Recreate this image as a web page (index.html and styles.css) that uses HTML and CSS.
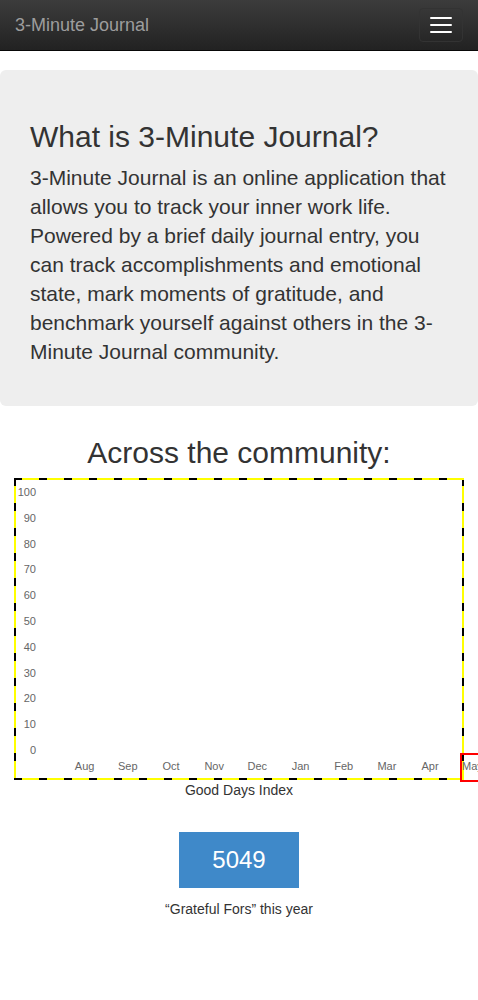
FILE: index.html
```html
<!DOCTYPE html>
<html>
<head>
<meta charset="utf-8">
<link rel="stylesheet" href="styles.css">
</head>
<body>
<nav class="navbar">
  <a class="brand">3-Minute Journal</a>
  <button class="toggle"><span class="bar"></span><span class="bar"></span><span class="bar"></span></button>
</nav>
<div class="jumbotron">
  <h1 class="jt-title">What is 3-Minute Journal?</h1>
  <p class="jt-text">3-Minute Journal is an online application that allows you to track your inner work life. Powered by a brief daily journal entry, you can track accomplishments and emotional state, mark moments of gratitude, and benchmark yourself against others in the 3-Minute Journal community.</p>
</div>
<div class="main">
  <h2 class="section-title">Across the community:</h2>
  <div class="chart">
    <div class="plot">
      <div class="y-axis">
        <span>100</span><span>90</span><span>80</span><span>70</span><span>60</span><span>50</span><span>40</span><span>30</span><span>20</span><span>10</span><span>0</span>
      </div>
    </div>
    <div class="x-axis">
      <span>Aug</span><span>Sep</span><span>Oct</span><span>Nov</span><span>Dec</span><span>Jan</span><span>Feb</span><span>Mar</span><span>Apr</span>
    </div>
    <div class="marker">May</div>
  </div>
  <div class="chart-caption">Good Days Index</div>
  <div class="stat">
    <div class="stat-btn">5049</div>
    <div class="stat-label">“Grateful Fors” this year</div>
  </div>
</div>
</body>
</html>
```
FILE: styles.css
```css
html, body {
  margin: 0;
  padding: 0;
  overflow-x: hidden;
}
body {
  font-family: "Liberation Sans", Arial, sans-serif;
  font-size: 14px;
  line-height: 1.42857;
  color: #333;
  background: #fff;
  width: 478px;
}
.navbar {
  height: 50px;
  box-sizing: content-box;
  border-bottom: 1px solid #080808;
  background: linear-gradient(to bottom, #3c3c3c 0, #222 100%);
  display: flex;
  align-items: center;
  justify-content: space-between;
  padding: 0 15px;
}
.brand {
  color: #9d9d9d;
  font-size: 18px;
  line-height: 20px;
  margin-top: -1px;
}
.toggle {
  width: 44px;
  height: 34px;
  margin-top: -1px;
  border: 1px solid #333;
  border-radius: 4px;
  background: transparent;
  display: flex;
  flex-direction: column;
  align-items: center;
  justify-content: center;
  gap: 5px;
  padding: 0;
}
.bar {
  display: block;
  width: 22px;
  height: 2px;
  background: #fff;
  border-radius: 1px;
}
.jumbotron {
  margin-top: 19px;
  background: #eee;
  border-radius: 6px;
  padding: 30px 30px 30px 30px;
  margin-bottom: 30px;
}
.jt-title {
  margin: 20px 0 10px;
  font-size: 30px;
  font-weight: 500;
  line-height: 33px;
}
.jt-text {
  margin: 0 0 10px;
  font-size: 21px;
  line-height: 29px;
}
.main {
  padding: 0 14px;
}
.section-title {
  margin: 0 0 9px;
  font-size: 30px;
  font-weight: 500;
  line-height: 33px;
  text-align: center;
}
.chart {
  position: relative;
  width: 450px;
  height: 302px;
  box-sizing: border-box;
  padding: 2px;
  background:
    repeating-linear-gradient(90deg, #000 0 8px, #ff0 8px 25px) top left / 100% 2px no-repeat,
    repeating-linear-gradient(90deg, #000 0 8px, #ff0 8px 25px) bottom left / 100% 2px no-repeat,
    repeating-linear-gradient(180deg, #000 0 8px, #ff0 8px 25px) top left / 2px 100% no-repeat,
    repeating-linear-gradient(180deg, #000 0 8px, #ff0 8px 25px) top right / 2px 100% no-repeat,
    #fff;
  display: flex;
  flex-direction: column;
}
.plot {
  height: 280px;
  display: flex;
}
.y-axis {
  width: 20px;
  margin-top: 6px;
  height: 271px;
  display: flex;
  flex-direction: column;
  justify-content: space-between;
  align-items: flex-end;
  font-size: 11px;
  line-height: 13px;
  color: #666;
}
.x-axis {
  display: flex;
  margin-left: 47px;
  font-size: 11px;
  line-height: 13px;
  color: #666;
}
.x-axis span {
  width: 43.2px;
  text-align: center;
  flex: none;
}
.marker {
  position: absolute;
  left: 446px;
  top: 275px;
  width: 40px;
  height: 25px;
  border: 2px solid #f00;
  font-size: 11px;
  line-height: 23px;
  color: #666;
  text-indent: 0;
}
.chart-caption {
  text-align: center;
  line-height: 20px;
  margin-left: -14px;
  margin-right: -14px;
}
.stat {
  display: flex;
  flex-direction: column;
  align-items: center;
  margin: 32px -14px 0;
}
.stat-btn {
  width: 120px;
  height: 56px;
  background: #3f89c9;
  color: #fff;
  font-size: 24px;
  display: flex;
  align-items: center;
  justify-content: center;
}
.stat-label {
  margin-top: 11px;
  line-height: 20px;
}
```
